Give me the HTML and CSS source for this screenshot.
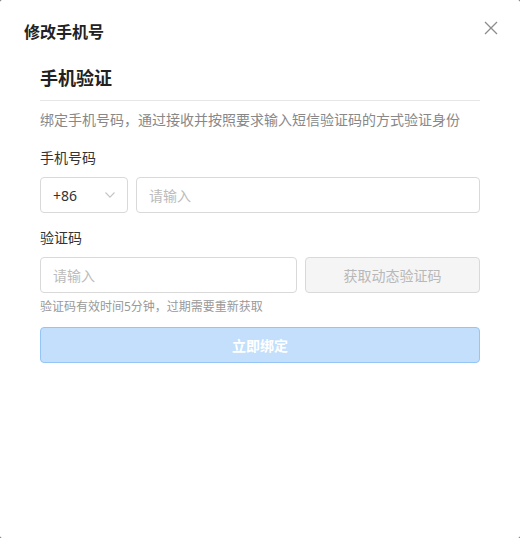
FILE: index.html
```html
<!DOCTYPE html>
<html lang="zh-CN">
<head>
<meta charset="utf-8">
<link rel="stylesheet" href="styles.css">
</head>
<body>
<div class="modal">
  <div class="header">
    <div class="title">修改手机号</div>
    <button class="close" aria-label="关闭">
      <svg width="14" height="14" viewBox="0 0 14 14"><path d="M1 1L13 13M13 1L1 13" stroke="#8c8c8c" stroke-width="1.3" fill="none"/></svg>
    </button>
  </div>
  <div class="content">
    <div class="section-title">手机验证</div>
    <div class="desc">绑定手机号码，通过接收并按照要求输入短信验证码的方式验证身份</div>
    <div class="label">手机号码</div>
    <div class="row">
      <div class="select">
        <span>+86</span>
        <svg width="10" height="6" viewBox="0 0 10 6"><path d="M0.5 0.5L5 5.2L9.5 0.5" stroke="#c4c4c4" stroke-width="1.1" fill="none"/></svg>
      </div>
      <div class="input grow">请输入</div>
    </div>
    <div class="label l2">验证码</div>
    <div class="row">
      <div class="input grow">请输入</div>
      <div class="code-btn">获取动态验证码</div>
    </div>
    <div class="hint">验证码有效时间5分钟，过期需要重新获取</div>
    <div class="submit">立即绑定</div>
  </div>
</div>
</body>
</html>
```
FILE: styles.css
```css
* { box-sizing: border-box; }
html { background: #555; }
body {
  margin: 0;
  font-family: "Noto Sans", "Noto Sans CJK SC", sans-serif;
  color: #333;
}
.modal {
  background: #fff;
  width: 520px;
  height: 538px;
  border-radius: 2px;
}
.header {
  display: flex;
  justify-content: space-between;
  align-items: center;
  padding: 20px 22px 0 24px;
  height: 44px;
}
.title {
  font-size: 16px;
  font-weight: 700;
  line-height: 24px;
  color: #222;
}
.close {
  border: 0;
  background: none;
  padding: 0;
  width: 14px;
  height: 14px;
  margin-top: -8px;
  display: flex;
}
.content {
  padding: 0 40px;
}
.section-title {
  margin-top: 21px;
  font-size: 18px;
  font-weight: 700;
  line-height: 26px;
  color: #222;
  padding-bottom: 9px;
  border-bottom: 1px solid #e6e6e6;
}
.desc {
  margin-top: 8px;
  font-size: 14px;
  line-height: 22px;
  color: #888;
}
.label {
  margin-top: 16px;
  font-size: 14px;
  line-height: 22px;
  color: #333;
}
.label.l2 { margin-top: 14px; }
.row {
  display: flex;
  gap: 8px;
  margin-top: 8px;
}
.select, .input, .code-btn {
  height: 36px;
  border: 1px solid #d9d9d9;
  border-radius: 4px;
  font-size: 14px;
  display: flex;
  align-items: center;
}
.select {
  width: 88px;
  padding: 0 12px 0 12px;
  justify-content: space-between;
  color: #333;
}
.input {
  padding: 0 12px;
  color: #bbb;
}
.grow { flex: 1; }
.code-btn {
  width: 175px;
  justify-content: center;
  background: #f5f5f5;
  color: #b8b8b8;
}
.hint {
  margin-top: 4px;
  font-size: 12px;
  line-height: 20px;
  color: #999;
}
.submit {
  margin-top: 10px;
  height: 36px;
  border: 1px solid #94c5f6;
  border-radius: 4px;
  background: #c3dffb;
  color: #fff;
  font-size: 14px;
  font-weight: 700;
  display: flex;
  align-items: center;
  justify-content: center;
}
```
